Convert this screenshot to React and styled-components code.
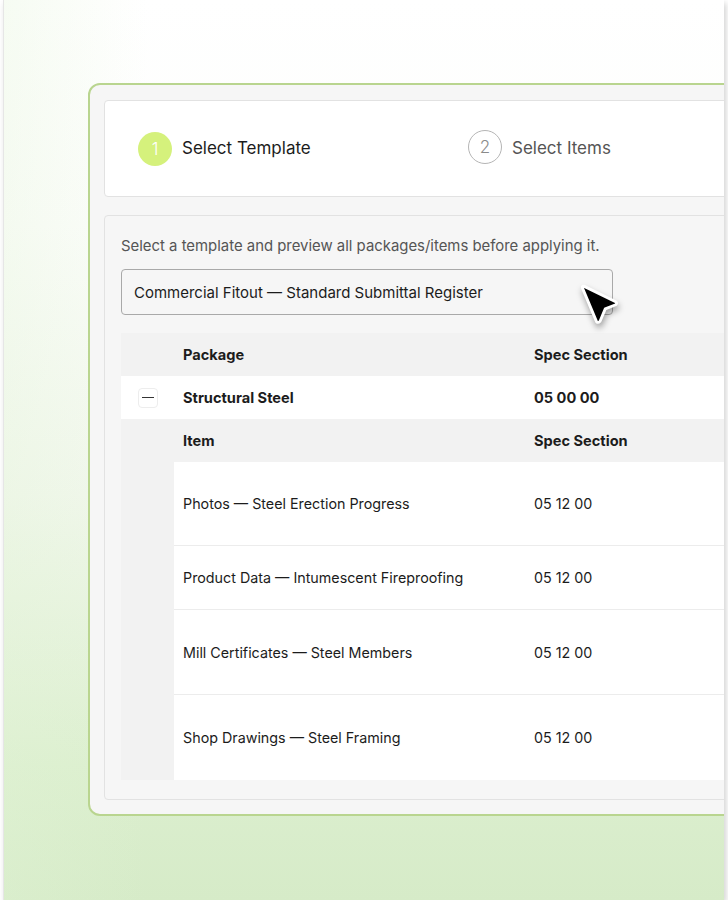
import React from "react";
import styled, { createGlobalStyle } from "styled-components";

const GlobalStyle = createGlobalStyle`
  html, body {
    margin: 0;
    padding: 0;
    background: #ffffff;
  }
  body {
    font-family: Inter, "Noto Sans", "Liberation Sans", sans-serif;
    color: #1c1c1c;
  }
`;

const Frame = styled.div`
  margin-left: 3px;
  width: 721px;
  height: 900px;
  overflow: hidden;
  border-left: 1px solid #e6e6e6;
  box-sizing: border-box;
  box-shadow: 2px 3px 6px rgba(0, 0, 0, 0.18);
  background:
    linear-gradient(to right, rgba(226, 244, 214, 0.3) 0%, rgba(226, 244, 214, 0) 20%),
    linear-gradient(to bottom, #ffffff 0%, #fcfdfb 25%, #f1f7ec 55%, #dcefcf 85%, #d6ebc8 100%);
  padding: 83px 0 0 84px;
`;

const Panel = styled.div`
  width: 740px;
  box-sizing: border-box;
  background: #f6f6f6;
  border: 2px solid #b9d58f;
  border-radius: 12px;
  padding: 15px 14px 14px 14px;
  display: flex;
  flex-direction: column;
  gap: 18px;
`;

const StepCard = styled.div`
  height: 97px;
  box-sizing: border-box;
  background: #ffffff;
  border: 1px solid #e2e2e2;
  border-radius: 4px;
  display: grid;
  grid-template-columns: 330px 330px;
  align-items: center;
  padding-left: 33px;
`;

const Step = styled.div`
  display: flex;
  align-items: center;
  gap: 10px;
`;

const StepDot = styled.div`
  width: 34px;
  height: 34px;
  border-radius: 50%;
  box-sizing: border-box;
  display: flex;
  align-items: center;
  justify-content: center;
  font-size: 17px;
  font-weight: 300;
  background: ${(p) => (p.$active ? "#d5f17c" : "#ffffff")};
  color: ${(p) => (p.$active ? "#ffffff" : "#8a8a8a")};
  border: ${(p) => (p.$active ? "none" : "1px solid #b5b5b5")};
  margin-top: ${(p) => (p.$active ? "0" : "-3px")};
`;

const StepLabel = styled.span`
  font-size: 17px;
  color: ${(p) => (p.$active ? "#1c1c1c" : "#555555")};
  margin-top: -2px;
`;

const ContentCard = styled.div`
  background: #f6f6f6;
  border: 1px solid #e2e2e2;
  border-radius: 4px;
  padding: 20px 0 19px 16px;
`;

const Hint = styled.p`
  margin: 0 0 13px 0;
  font-size: 14.9px;
  line-height: 20px;
  color: #555555;
`;

const SelectWrap = styled.div`
  position: relative;
  width: 492px;
  margin-bottom: 18px;
`;

const SelectBox = styled.div`
  height: 46px;
  box-sizing: border-box;
  border: 1px solid #a9a9a9;
  border-radius: 4px;
  background: #f6f6f6;
  display: flex;
  align-items: center;
  padding-left: 12px;
  font-size: 15px;
  color: #1c1c1c;
`;

const Cursor = styled.svg`
  position: absolute;
  left: 455px;
  top: 10px;
  width: 52px;
  height: 52px;
  overflow: visible;
  filter: drop-shadow(1px 4px 3px rgba(0, 0, 0, 0.35));
`;

const Table = styled.div`
  display: grid;
  grid-template-columns: 53px 351px 1fr;
`;

const Cell = styled.div`
  display: flex;
  align-items: center;
  height: ${(p) => p.$h || 43}px;
  box-sizing: border-box;
  padding-left: ${(p) => (p.$pad ? 9 : 0)}px;
  justify-content: ${(p) => (p.$center ? "center" : "flex-start")};
  background: ${(p) => (p.$grey ? "#f2f2f2" : "#ffffff")};
  border-bottom: ${(p) => (p.$line ? "1px solid #ececec" : "none")};
  font-size: ${(p) => (p.$bold ? 14.6 : 14.3)}px;
  font-weight: ${(p) => (p.$bold ? 700 : 400)};
  color: #1c1c1c;
  white-space: nowrap;
`;

const ToggleBtn = styled.div`
  width: 20px;
  height: 20px;
  box-sizing: border-box;
  border: 1px solid #ededed;
  border-radius: 4px;
  background: #ffffff;
  display: flex;
  align-items: center;
  justify-content: center;

  &::before {
    content: "";
    width: 12px;
    height: 1.5px;
    background: #333333;
  }
`;

const items = [
  { name: "Photos — Steel Erection Progress", spec: "05 12 00", h: 84 },
  { name: "Product Data — Intumescent Fireproofing", spec: "05 12 00", h: 64 },
  { name: "Mill Certificates — Steel Members", spec: "05 12 00", h: 85 },
  { name: "Shop Drawings — Steel Framing", spec: "05 12 00", h: 85 },
];

export default function App() {
  return (
    <>
      <GlobalStyle />
      <Frame>
        <Panel>
          <StepCard>
            <Step>
              <StepDot $active>1</StepDot>
              <StepLabel $active>Select Template</StepLabel>
            </Step>
            <Step>
              <StepDot>2</StepDot>
              <StepLabel>Select Items</StepLabel>
            </Step>
          </StepCard>
          <ContentCard>
            <Hint>Select a template and preview all packages/items before applying it.</Hint>
            <SelectWrap>
              <SelectBox>Commercial Fitout — Standard Submittal Register</SelectBox>
              <Cursor viewBox="0 0 40 40">
                <path
                  d="M6 5.5 L30.5 17.5 Q32 18.5 30.5 19.8 L22.5 23 L18.5 32.5 Q17 34 15.8 32.8 L5 7 Q4.6 5.2 6 5.5 Z"
                  fill="#000000"
                  stroke="#ffffff"
                  strokeWidth="2.2"
                  strokeLinejoin="round"
                />
              </Cursor>
            </SelectWrap>
            <Table>
              <Cell $grey />
              <Cell $grey $pad $bold>Package</Cell>
              <Cell $grey $pad $bold>Spec Section</Cell>

              <Cell $center>
                <ToggleBtn />
              </Cell>
              <Cell $pad $bold>Structural Steel</Cell>
              <Cell $pad $bold>05 00 00</Cell>

              <Cell $grey />
              <Cell $grey $pad $bold>Item</Cell>
              <Cell $grey $pad $bold>Spec Section</Cell>

              {items.map((it, i) => (
                <React.Fragment key={it.name}>
                  <Cell $grey $h={it.h} />
                  <Cell $pad $h={it.h} $line={i < items.length - 1}>{it.name}</Cell>
                  <Cell $pad $h={it.h} $line={i < items.length - 1}>{it.spec}</Cell>
                </React.Fragment>
              ))}
            </Table>
          </ContentCard>
        </Panel>
      </Frame>
    </>
  );
}
